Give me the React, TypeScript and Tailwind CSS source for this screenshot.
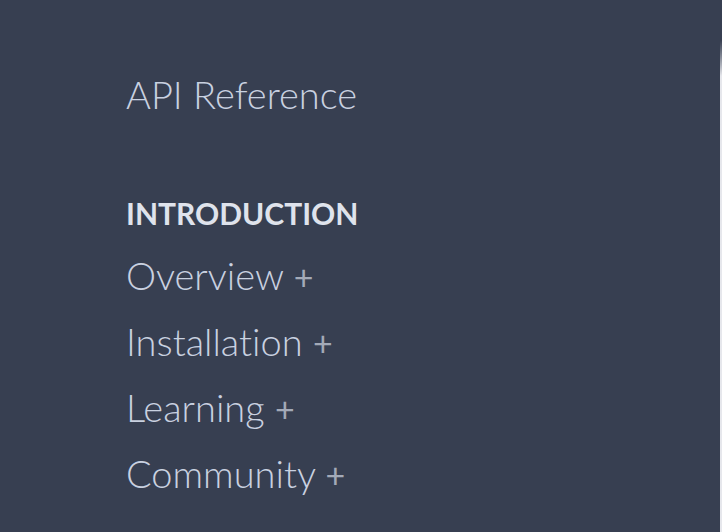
export default function App() {
  const items = ["Overview", "Installation", "Learning", "Community"];
  return (
    <div
      className="flex h-[532px] w-[722px] overflow-hidden bg-[#373f51] [font-variant-ligatures:none]"
      style={{ fontFamily: "Lato, 'Open Sans', sans-serif" }}
    >
      <div className="w-[720px] shrink-0 pl-[126px] pt-[71px]">
        <div className="text-[38px] font-light leading-[46px] text-[#c9d1e0]">API Reference</div>
        <div className="mt-[79px] text-[30px] font-bold leading-[35px] text-[#dfe3ec]">INTRODUCTION</div>
        <ul className="mt-[11px] flex flex-col">
          {items.map((it) => (
            <li key={it} className="h-[66px] text-[38px] font-light leading-[66px] text-[#c9d1e0]">
              {it}{" "}
              <span className="text-[34px] leading-none font-normal text-[#a3aab8]">+</span>
            </li>
          ))}
        </ul>
      </div>
      <div className="mt-[40px] flex-1 bg-gradient-to-b from-[#373f51] to-[#e6e7ec] to-[36px]" />
    </div>
  );
}
